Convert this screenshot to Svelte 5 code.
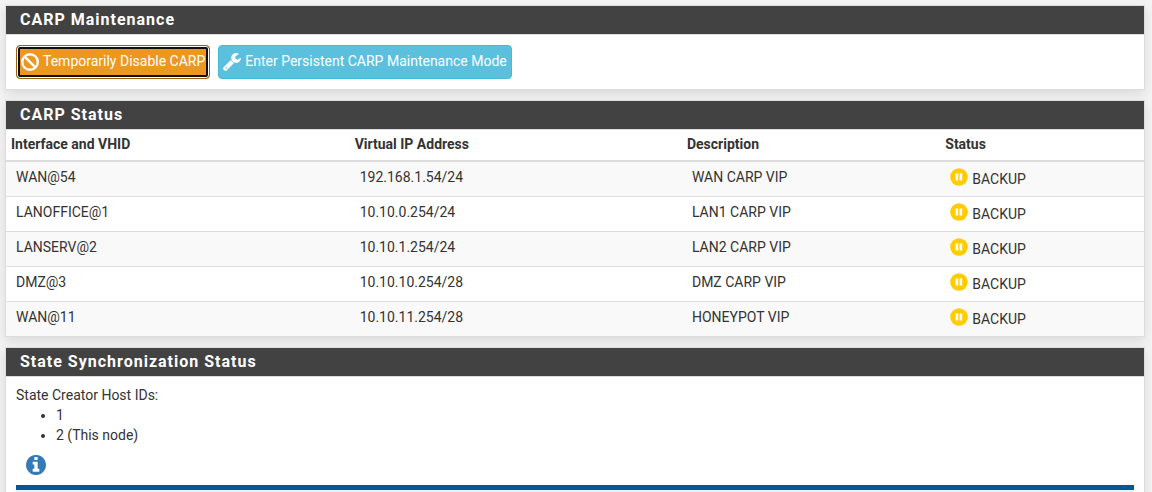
<script>
  const rows = [
    { vhid: 'WAN@54', ip: '192.168.1.54/24', descr: 'WAN CARP VIP' },
    { vhid: 'LANOFFICE@1', ip: '10.10.0.254/24', descr: 'LAN1 CARP VIP' },
    { vhid: 'LANSERV@2', ip: '10.10.1.254/24', descr: 'LAN2 CARP VIP' },
    { vhid: 'DMZ@3', ip: '10.10.10.254/28', descr: 'DMZ CARP VIP' },
    { vhid: 'WAN@11', ip: '10.10.11.254/28', descr: 'HONEYPOT VIP' }
  ];
</script>

<main>
  <section class="panel">
    <h2>CARP Maintenance</h2>
    <div class="body actions">
      <button class="btn warning" type="button">
        <svg class="ban" viewBox="0 0 18 18" aria-hidden="true"><circle cx="9" cy="9" r="7.8" /><path d="M3.6 3.6l10.8 10.8" /></svg>
        <span>Temporarily Disable CARP</span>
      </button>
      <button class="btn info" type="button">
        <svg class="wrench" viewBox="85 128 1643 1643" aria-hidden="true"><path d="M448 1472q0-26-19-45t-45-19-45 19-19 45 19 45 45 19 45-19 19-45zm644-420l-682 682q-37 37-90 37-52 0-91-37l-106-108q-38-36-38-90 0-53 38-91l681-681q39 98 114.5 173.5t173.5 114.5zm634-435q0 39-23 106-47 134-164.5 217.5t-258.5 83.5q-185 0-316.5-131.5t-131.5-316.5 131.5-316.5 316.5-131.5q58 0 121.5 16.5t107.5 46.5q16 11 16 28t-16 28l-293 169v224l193 107q5-3 79-48.5t135.5-81 70.5-35.5q15 0 23.5 10t8.5 25z" /></svg>
        <span>Enter Persistent CARP Maintenance Mode</span>
      </button>
    </div>
  </section>

  <section class="panel">
    <h2>CARP Status</h2>
    <table>
      <colgroup><col class="c1" /><col class="c2" /><col class="c3" /><col /></colgroup>
      <thead>
        <tr><th>Interface and VHID</th><th>Virtual IP Address</th><th>Description</th><th>Status</th></tr>
      </thead>
      <tbody>
        {#each rows as row}
          <tr>
            <td>{row.vhid}</td>
            <td>{row.ip}</td>
            <td>{row.descr}</td>
            <td>
              <div class="state">
                <svg viewBox="0 0 18 18" aria-hidden="true"><circle cx="9" cy="9" r="8.8" /><path fill="#fff" d="M5.6 5.5h2.6v7H5.6zM9.6 5.5h2.6v7H9.6z" /></svg>
                <span>BACKUP</span>
              </div>
            </td>
          </tr>
        {/each}
      </tbody>
    </table>
  </section>

  <section class="panel">
    <h2>State Synchronization Status</h2>
    <div class="body sync">
      <div>State Creator Host IDs:</div>
      <ul>
        <li>1</li>
        <li>2 (This node)</li>
      </ul>
      <button class="help" type="button" aria-label="Info">
        <svg viewBox="128 128 1536 1536" aria-hidden="true"><path d="M1152 1376v-160q0-14-9-23t-23-9h-96v-512q0-14-9-23t-23-9h-320q-14 0-23 9t-9 23v160q0 14 9 23t23 9h96v320h-96q-14 0-23 9t-9 23v160q0 14 9 23t23 9h448q14 0 23-9t9-23zm-128-896v-160q0-14-9-23t-23-9h-192q-14 0-23 9t-9 23v160q0 14 9 23t23 9h192q14 0 23-9t9-23zm640 416q0 209-103 385.5t-279.5 279.5-385.5 103-385.5-103-279.5-279.5-103-385.5 103-385.5 279.5-279.5 385.5-103 385.5 103 279.5 279.5 103 385.5z" /></svg>
      </button>
      <div class="callout"></div>
    </div>
  </section>
</main>

<style>
  :global(body) {
    background: #f3f3f3;
    overflow: hidden;
  }
  main {
    box-sizing: border-box;
    height: 100vh;
    overflow: hidden;
    padding: 5px 7px 0 5px;
    font: 14px/20px Roboto, sans-serif;
    color: #333;
  }
  .panel {
    margin-bottom: 10px;
    border: 1px solid #ddd;
    background: #fff;
    box-shadow: 0 4px 10px rgba(0, 0, 0, 0.1);
  }
  h2 {
    margin: 0;
    padding: 5px 14px;
    border-bottom: 1px solid #ddd;
    background: #424242;
    color: #fff;
    font-size: 16px;
    line-height: 18px;
    font-weight: 700;
    letter-spacing: 1px;
  }
  .body {
    padding: 10px;
  }
  .sync {
    padding-top: 8px;
  }
  .actions {
    display: flex;
    gap: 8px;
  }
  .btn {
    display: flex;
    align-items: center;
    gap: 4px;
    height: 34px;
    padding: 0 4px;
    border: 1px solid;
    border-radius: 4px;
    color: #fff;
    font: inherit;
    white-space: nowrap;
  }
  .btn span {
    padding-bottom: 2px;
  }
  .warning {
    border-color: #985f0d;
    background: #ec971f;
    box-shadow: inset 0 0 0 1px #fff, inset 0 0 0 3px #101010;
  }
  .info {
    border-color: #46b8da;
    background: #5bc0de;
  }
  .btn svg {
    width: 18px;
    height: 18px;
  }
  .ban {
    fill: none;
    stroke: #fff;
    stroke-width: 2.4;
  }
  .wrench {
    fill: #fff;
  }
  table {
    width: 100%;
    table-layout: fixed;
    border-collapse: separate;
    border-spacing: 0;
  }
  .c1 {
    width: 30.2%;
  }
  .c2 {
    width: 29.2%;
  }
  .c3 {
    width: 22.7%;
  }
  th {
    padding: 4px 5px 6px;
    border-bottom: 2px solid #ddd;
    text-align: left;
    font-weight: 700;
  }
  td {
    height: 34px;
    box-sizing: border-box;
    padding: 5px 10px 9px;
    line-height: 20px;
    border-bottom: 1px solid #ddd;
  }
  tbody tr:nth-child(odd) {
    background: #f9f9f9;
  }
  tbody tr:last-child td {
    border-bottom: 0;
  }
  .state {
    display: flex;
    gap: 4px;
    height: 20px;
  }
  .state span {
    padding-top: 2px;
  }
  .state svg {
    width: 18px;
    height: 18px;
    margin-top: 1px;
    fill: #fc0;
  }
  ul {
    margin: 0 0 10px;
    padding-left: 40px;
  }
  .help {
    display: block;
    margin: 0 10px 10px;
    padding: 0;
    border: 0;
    background: none;
  }
  .help svg {
    display: block;
    width: 20px;
    height: 20px;
    fill: #337ab7;
  }
  .callout {
    height: 60px;
    border-top: 5px solid #01579b;
    background: #e1f5fe;
    box-shadow: 0 6px 12px rgba(0, 0, 0, 0.1);
  }
</style>
